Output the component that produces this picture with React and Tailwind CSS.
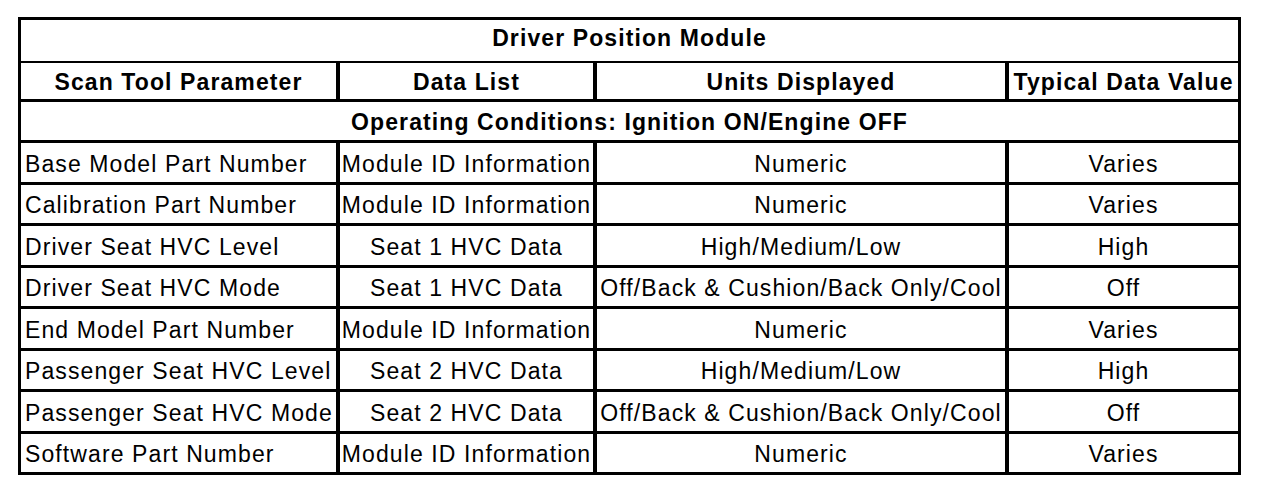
const rows = [
  ['Base Model Part Number', 'Module ID Information', 'Numeric', 'Varies'],
  ['Calibration Part Number', 'Module ID Information', 'Numeric', 'Varies'],
  ['Driver Seat HVC Level', 'Seat 1 HVC Data', 'High/Medium/Low', 'High'],
  ['Driver Seat HVC Mode', 'Seat 1 HVC Data', 'Off/Back & Cushion/Back Only/Cool', 'Off'],
  ['End Model Part Number', 'Module ID Information', 'Numeric', 'Varies'],
  ['Passenger Seat HVC Level', 'Seat 2 HVC Data', 'High/Medium/Low', 'High'],
  ['Passenger Seat HVC Mode', 'Seat 2 HVC Data', 'Off/Back & Cushion/Back Only/Cool', 'Off'],
  ['Software Part Number', 'Module ID Information', 'Numeric', 'Varies'],
];

function Row({ cells, bold, last, height = 'h-[41px]' }) {
  return (
    <div className={`flex ${height} ${last ? '' : 'border-b-[3px] border-black'} ${bold ? 'font-bold' : ''}`}>
      <div className={`flex w-[319px] items-center border-r-4 border-black pt-[3px] ${bold ? 'justify-center' : 'pl-[4px]'}`}>
        {cells[0]}
      </div>
      <div className="flex w-[257px] items-center justify-center whitespace-nowrap border-r-4 border-black pt-[3px]">{cells[1]}</div>
      <div className="flex w-[412px] items-center justify-center whitespace-nowrap border-r-4 border-black pt-[3px]">{cells[2]}</div>
      <div className="flex w-[229px] items-center justify-center whitespace-nowrap pt-[3px]">{cells[3]}</div>
    </div>
  );
}

export default function App() {
  return (
    <div
      className="h-[492px] w-[1264px] bg-white pl-[18px] pt-[17px] text-[23px] leading-none tracking-[1.1px] text-black"
      style={{ fontFamily: '"Liberation Sans", Arial, sans-serif' }}
    >
      <div className="w-[1223px] border-[3px] border-black">
        <div className="flex h-[43px] items-center justify-center border-b-2 border-black pb-[4px] font-bold">
          Driver Position Module
        </div>
        <Row
          bold
          height="h-[39px]"
          cells={['Scan Tool Parameter', 'Data List', 'Units Displayed', 'Typical Data Value']}
        />
        <div className="flex h-[41px] items-center justify-center border-b-[3px] border-black pt-[3px] font-bold">
          Operating Conditions: Ignition ON/Engine OFF
        </div>
        {rows.map((r, i) => {
          const last = i === rows.length - 1;
          const height = last ? 'h-[38px]' : i % 2 === 0 ? 'h-[42px]' : 'h-[41px]';
          return <Row key={r[0]} cells={r} last={last} height={height} />;
        })}
      </div>
    </div>
  );
}
